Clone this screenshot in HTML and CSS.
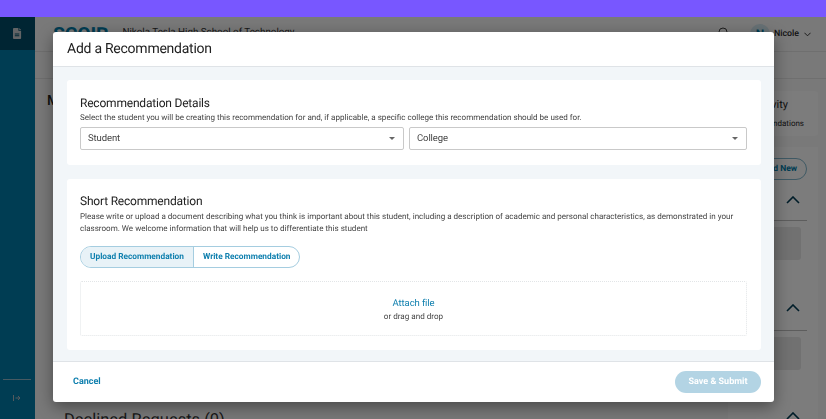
FILE: index.html
```html
<!DOCTYPE html>
<html lang="en">
<head>
<meta charset="utf-8">
<title>Add a Recommendation</title>
<link rel="stylesheet" href="styles.css">
</head>
<body>
<div class="topbar"></div>
<div class="app">
  <aside class="sidebar">
    <div class="side-tile">
      <svg class="doc" viewBox="0 0 10 12" width="9" height="11"><path d="M1 0h5v3h3v8a1 1 0 0 1-1 1H1a1 1 0 0 1-1-1V1a1 1 0 0 1 1-1zM7 0l2 2H7zM2 6h5v1H2zM2 8h5v1H2z" fill-rule="evenodd" fill="#c4c9cc"/></svg>
    </div>
    <div class="side-bottom">
      <div class="side-rule"></div>
      <svg class="collapse" viewBox="0 0 8 8" width="8" height="8"><path d="M0.5 1v6M2.5 4h4.5M5 2l2 2-2 2" fill="none" stroke="#a9b4ba" stroke-width="1"/></svg>
    </div>
  </aside>
  <div class="main">
    <header class="header">
      <span class="logo">SCOIR</span>
      <span class="school">Nikola Tesla High School of Technology</span>
      <svg class="bell" viewBox="0 0 12 14" width="12" height="14"><path d="M6 1a4 4 0 0 1 4 4v5H2V5a4 4 0 0 1 4-4z" fill="none" stroke="#3c3c3c" stroke-width="1"/></svg>
      <span class="avatar">N</span>
      <span class="username">Nicole</span>
      <svg class="caret-down" viewBox="0 0 8 5" width="7" height="5"><path d="M0.5 0.5L4 4l3.5-3.5" fill="none" stroke="#1f1f1f" stroke-width="1"/></svg>
    </header>
    <div class="subheader"></div>
    <div class="content">
      <div class="left-col">
        <h2 class="page-title">My Requests</h2>
        <h3 class="declined">Declined Requests (0)</h3>
      </div>
      <div class="right-col">
        <div class="activity">
          <div class="activity-title">Activity</div>
          <div class="activity-sub">Recommendations</div>
        </div>
        <div class="requests">
          <div class="pill">Add New</div>
          <svg class="chev" viewBox="0 0 14 8" width="14" height="8"><path d="M1 7l6-6 6 6" fill="none" stroke="#003a52" stroke-width="1.6"/></svg>
          <div class="rule"></div>
          <div class="ghost"></div>
          <svg class="chev chev-b" viewBox="0 0 14 8" width="14" height="8"><path d="M1 7l6-6 6 6" fill="none" stroke="#003a52" stroke-width="1.6"/></svg>
          <div class="rule rule-b"></div>
          <div class="ghost"></div>
          <svg class="chev chev-c" viewBox="0 0 14 8" width="14" height="8"><path d="M1 7l6-6 6 6" fill="none" stroke="#003a52" stroke-width="1.6"/></svg>
        </div>
      </div>
    </div>
  </div>
</div>
<div class="backdrop"></div>
<div class="modal">
  <div class="modal-head">Add a Recommendation</div>
  <div class="modal-body">
    <section class="card card-details">
      <h3 class="card-title">Recommendation Details</h3>
      <p class="card-text">Select the student you will be creating this recommendation for and, if applicable, a specific college this recommendation should be used for.</p>
      <div class="selects">
        <div class="select select-student"><span>Student</span><i class="arrow"></i></div>
        <div class="select select-college"><span>College</span><i class="arrow"></i></div>
      </div>
    </section>
    <section class="card card-short">
      <h3 class="card-title">Short Recommendation</h3>
      <p class="card-text">Please write or upload a document describing what you think is important about this student, including a description of academic and personal characteristics, as demonstrated in your classroom. We welcome information that will help us to differentiate this student</p>
      <div class="toggle">
        <span class="toggle-item active">Upload Recommendation</span>
        <span class="toggle-item">Write Recommendation</span>
      </div>
      <div class="drop">
        <span class="attach">Attach file</span>
        <span class="dragdrop">or drag and drop</span>
      </div>
    </section>
  </div>
  <div class="modal-foot">
    <span class="cancel">Cancel</span>
    <span class="submit">Save &amp; Submit</span>
  </div>
</div>
</body>
</html>
```
FILE: styles.css
```css
* { box-sizing: border-box; }
html, body { margin: 0; padding: 0; height: 100%; overflow: hidden; }
body { font-family: Roboto, "Liberation Sans", sans-serif; text-rendering: geometricPrecision; background: #fff; color: #1f1f1f; position: relative; filter: blur(0.3px); }
h2, h3, p { margin: 0; font-weight: 400; }

.topbar { height: 17px; background: #7857ff; position: relative; z-index: 3; }
.app { display: flex; height: 402px; background: #f2f2f2; overflow: hidden; }

.sidebar { width: 35px; flex: none; background: #007ba6; display: flex; flex-direction: column; justify-content: space-between; }
.side-tile { height: 33px; background: #004a66; display: flex; align-items: center; justify-content: center; }
.side-bottom { display: flex; flex-direction: column; align-items: center; padding: 0 2px 17px 0; gap: 14px; }
.side-rule { width: 28px; height: 1px; background: #8fb4c4; }

.main { flex: 1; min-width: 0; display: flex; flex-direction: column; }
.header { height: 35px; flex: none; display: flex; align-items: center; padding: 0 15px 0 18px; border-bottom: 1px solid #dedede; }
.logo { font-size: 19.5px; font-weight: 700; color: #007ba6; letter-spacing: -0.2px; }
.school { font-size: 9.8px; margin: 0 0 4px 14px; color: #333; }
.bell { margin-left: auto; }
.avatar { width: 20px; height: 20px; border-radius: 50%; background: #cfe2ea; color: #007ba6; font-size: 12px; font-weight: 700; display: flex; align-items: center; justify-content: center; margin-left: 21px; }
.username { font-size: 8.8px; font-weight: 500; margin-left: 4px; }
.caret-down { margin-left: 5px; }
.subheader { height: 27px; flex: none; border-bottom: 1px solid #dedede; }

.content { flex: 1; display: flex; padding: 12px 8px 0 12px; min-height: 0; }
.left-col { flex: 1; min-width: 0; overflow: hidden; }
.page-title { font-size: 14px; font-weight: 500; margin-top: 2px; height: 317px; }
.declined { font-size: 16.5px; margin-left: 17px; margin-top: 1px; color: #333; white-space: nowrap; }
.right-col { width: 90px; flex: none; overflow: hidden; }
.activity { height: 45px; background: #f8f8f8; border-radius: 3px; padding: 7px 14px 0 0; text-align: right; }
.activity-title { font-size: 11px; margin-right: 16px; }
.activity-sub { font-size: 8px; margin-top: 8px; white-space: nowrap; }
.requests { height: 300px; margin-top: 11px; background: #f8f8f8; padding: 11px 11px 0 0; display: flex; flex-direction: column; align-items: flex-end; }
.pill { height: 22px; width: 70px; border: 1px solid #7fb3c9; border-radius: 11px; font-size: 8.5px; font-weight: 700; color: #007ba6; line-height: 20px; text-align: right; padding-right: 9px; flex: none; }
.chev { margin: 16px 7px 0 0; flex: none; }
.chev-b { margin-top: 44px; }
.chev-c { margin-top: 42px; }
.rule { width: 40px; height: 1px; background: #bbb; margin-top: 16px; flex: none; }
.rule-b { margin-top: 18px; }
.ghost { width: 34px; height: 33px; margin: 6px 6px 0 0; background: #e2e2e2; border-radius: 3px; flex: none; }

.backdrop { position: absolute; inset: 17px 0 0 0; background: rgba(0, 0, 0, 0.5); z-index: 1; }

.modal { position: absolute; left: 53px; top: 32px; width: 721px; height: 370px; background: #fff; border-radius: 3px; box-shadow: 0 5px 16px rgba(0, 0, 0, 0.4); z-index: 2; display: flex; flex-direction: column; }
.modal-head { height: 35px; flex: none; font-size: 14px; letter-spacing: -0.25px; padding: 8px 14px 0; line-height: 18px; border-bottom: 1px solid #dfe3e7; color: #212121; }
.modal-body { flex: 1; min-height: 0; background: #f2f6f9; padding: 13px 13px 11px 14px; display: flex; flex-direction: column; gap: 14px; }
.modal-foot { height: 41px; flex: none; border-top: 1px solid #dfe3e7; display: flex; align-items: center; justify-content: space-between; padding: 0 13px 0 20px; }

.card { background: #fff; border-radius: 3px; padding: 0 14px 0 13px; }
.card-details { height: 85px; padding-top: 15px; }
.card-details .card-text { margin-top: 1px; }
.card-short { flex: 1; min-height: 0; padding-top: 14px; }
.card-short .card-text { margin-top: 2px; }
.card-title { font-size: 12px; letter-spacing: -0.2px; line-height: 16px; color: #212121; }
.card-text { font-size: 8.06px; line-height: 11.5px; color: #444; }

.selects { display: flex; gap: 5px; margin-top: 3px; }
.select { height: 23px; border: 1px solid #c9c9c9; border-radius: 2px; background: #fff; display: flex; align-items: center; justify-content: space-between; font-size: 9.5px; letter-spacing: -0.1px; color: #444; padding: 0 8px 0 7px; }
.select-student { width: 324px; }
.select-college { flex: 1; }
.arrow { width: 0; height: 0; border-left: 3px solid transparent; border-right: 3px solid transparent; border-top: 3px solid #666; }

.toggle { display: inline-flex; height: 22px; border: 1px solid #a5cde0; border-radius: 11px; overflow: hidden; margin-top: 12px; vertical-align: top; }
.toggle-item { font-size: 8.3px; font-weight: 700; color: #0e7fae; line-height: 21px; padding: 0 9px; }
.toggle-item.active { background: #e8f2f7; border-right: 1px solid #a5cde0; }

.drop { height: 55px; margin-top: 13px; border: 1px dotted #e2e5e7; border-radius: 2px; display: flex; flex-direction: column; align-items: center; padding-top: 15px; }
.attach { font-size: 9.5px; letter-spacing: -0.1px; line-height: 13px; color: #0e7fae; }
.dragdrop { font-size: 8.1px; line-height: 13px; color: #444; }

.cancel { font-size: 9px; font-weight: 700; color: #0e7fae; }
.submit { width: 86px; height: 22px; border-radius: 11px; background: #b3d4e4; color: #fff; font-size: 9px; font-weight: 700; text-align: center; line-height: 22px; }
```
